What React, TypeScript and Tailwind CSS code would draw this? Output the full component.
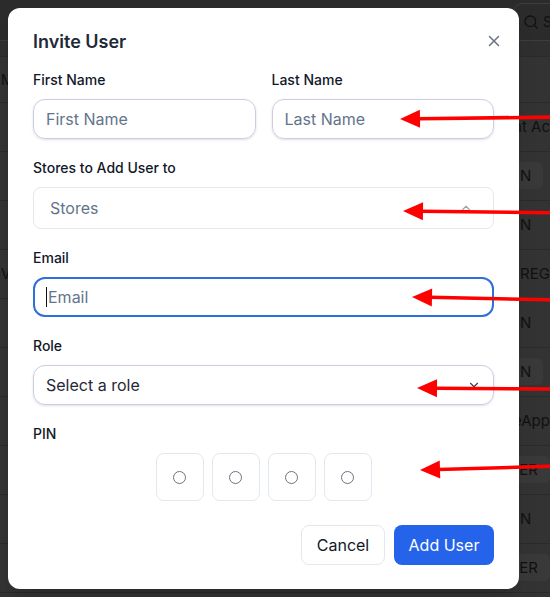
import { X, ChevronUp, ChevronDown, Search } from "lucide-react";

// visible slices of the users table that sits behind the dialog
const rows = [
  { left: "", text: "nt Ac", badge: false },
  { left: "", text: "N", badge: true },
  { left: "", text: "N", badge: false },
  { left: "V", text: "REGIS", badge: false },
  { left: "", text: "N", badge: false },
  { left: "", text: "N", badge: true },
  { left: "", text: "eApp", badge: false },
  { left: "", text: "IER", badge: true },
  { left: "", text: "N", badge: false },
  { left: "", text: "IER", badge: true },
];

function Arrow({ tx, ty, ex, ey }: { tx: number; ty: number; ex: number; ey: number }) {
  const dx = ex - tx;
  const dy = ey - ty;
  const len = Math.sqrt(dx * dx + dy * dy);
  const ux = dx / len;
  const uy = dy / len;
  const hl = 20;
  const hw = 9;
  const bx = tx + ux * hl;
  const by = ty + uy * hl;
  const p1 = `${bx - uy * hw},${by + ux * hw}`;
  const p2 = `${bx + uy * hw},${by - ux * hw}`;
  return (
    <g>
      <line x1={bx - ux * 2} y1={by - uy * 2} x2={ex} y2={ey} stroke="#ff0000" strokeWidth={3.5} />
      <polygon points={`${tx},${ty} ${p1} ${p2}`} fill="#ff0000" />
    </g>
  );
}

function Field({ label, children }: { label: string; children: React.ReactNode }) {
  return (
    <div className="flex flex-col">
      <label className="h-5 text-sm leading-5 font-medium text-[#111827] mb-[9px]">{label}</label>
      {children}
    </div>
  );
}

export default function App() {
  return (
    <div
      className="relative w-[550px] h-[597px] overflow-hidden bg-[#333333]"
      style={{ fontFamily: "Inter, 'Noto Sans', sans-serif" }}
    >
      {/* page behind the overlay */}
      <div className="flex flex-col text-[#111] text-sm">
        <div className="h-[41px] bg-[#2b2b2b] flex justify-end items-center border-b border-[#3a3a3a]">
          <div className="w-[44px] h-[38px] -mr-2 mt-1 rounded-l-lg border border-[#3d3d3d] flex items-center gap-1 pl-2">
            <Search size={16} className="text-[#111]" />
            <span>S</span>
          </div>
        </div>
        <div className="h-4 bg-[#2f2f2f] border-b border-[#2a2a2a]" />
        <div className="h-[46px] flex items-center border-b border-[#2a2a2a]">
          <span className="w-[10px] pl-[1px]">M</span>
        </div>
        {rows.map((r, i) => (
          <div key={i} className="h-[49px] flex items-center border-b border-[#2a2a2a]">
            <span className="w-[10px] pl-[1px]">{r.left}</span>
            <div className="ml-[510px] whitespace-nowrap text-[15px]">
              {r.badge ? (
                <span className="-ml-[16px] pl-[16px] pr-3 py-1 bg-[#393939] rounded-md">{r.text}</span>
              ) : (
                <span>{r.text}</span>
              )}
            </div>
          </div>
        ))}
      </div>

      {/* dialog */}
      <div className="absolute left-2 top-2 w-[511px] bg-white rounded-xl shadow-xl px-[25px] pt-5 pb-6">
        <button className="absolute top-[24px] right-[16px] text-[#6b7280]">
          <X size={18} strokeWidth={2} />
        </button>
        <h2 className="text-lg leading-7 font-semibold text-[#1f2937]">Invite User</h2>

        <div className="mt-[14px] flex flex-col gap-[19px]">
          <div className="grid grid-cols-2 gap-4">
            <Field label="First Name">
              <input
                placeholder="First Name"
                className="h-10 rounded-xl border border-[#c9cee2] shadow-sm px-3 text-base text-[#1f2937] placeholder:text-[#64748b] outline-none"
              />
            </Field>
            <Field label="Last Name">
              <input
                placeholder="Last Name"
                className="h-10 rounded-xl border border-[#c9cee2] shadow-sm px-3 text-base text-[#1f2937] placeholder:text-[#64748b] outline-none"
              />
            </Field>
          </div>

          <Field label="Stores to Add User to">
            <div className="h-[42px] rounded-lg border border-[#e2e8f0] flex items-center justify-between pl-4 pr-5">
              <span className="text-base text-[#64748b]">Stores</span>
              <ChevronUp size={14} className="text-[#9ca3af]" />
            </div>
          </Field>

          <Field label="Email">
            <div className="h-10 rounded-xl border-2 border-[#2f6fd8] flex items-center px-[11px]">
              <span className="w-px h-5 bg-[#111] mr-px" />
              <span className="text-base text-[#64748b]">Email</span>
            </div>
          </Field>

          <Field label="Role">
            <div className="h-10 rounded-xl border border-[#c9cee2] shadow-sm flex items-center justify-between pl-3 pr-3">
              <span className="text-base text-[#1f2937]">Select a role</span>
              <ChevronDown size={14} className="text-[#374151]" />
            </div>
          </Field>

          <Field label="PIN">
            <div className="flex justify-center gap-2">
              {[0, 1, 2, 3].map((i) => (
                <div key={i} className="w-12 h-12 rounded-lg border border-[#e2e8f0] flex items-center justify-center">
                  <div className="w-[13px] h-[13px] rounded-full border-[1.5px] border-[#6b7280]" />
                </div>
              ))}
            </div>
          </Field>
        </div>

        <div className="mt-6 flex justify-end gap-[9px]">
          <button className="h-10 w-[84px] rounded-lg border border-[#e2e8f0] text-base text-[#111827]">Cancel</button>
          <button className="h-10 w-[100px] rounded-lg bg-[#2563eb] text-base text-white">Add User</button>
        </div>
      </div>

      {/* annotation arrows */}
      <svg className="absolute inset-0 pointer-events-none" width={550} height={597}>
        <Arrow tx={400} ty={119} ex={560} ey={117} />
        <Arrow tx={403} ty={211} ex={560} ey={213} />
        <Arrow tx={412} ty={297} ex={560} ey={300} />
        <Arrow tx={417} ty={388} ex={560} ey={389} />
        <Arrow tx={420} ty={470} ex={560} ey={466} />
      </svg>
    </div>
  );
}
